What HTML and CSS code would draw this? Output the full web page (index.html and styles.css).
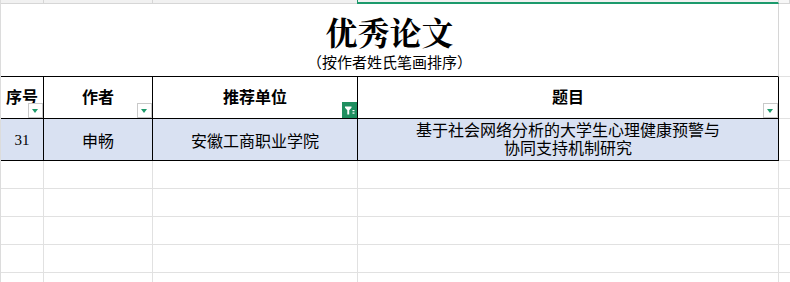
FILE: index.html
```html
<!DOCTYPE html>
<html lang="zh-CN">
<head>
<meta charset="utf-8">
<title>优秀论文</title>
<link rel="stylesheet" href="styles.css">
</head>
<body>
<div class="sheet">
  <!-- trailing edge of the row above -->
  <div class="cell strip"></div>
  <div class="cell strip"></div>
  <div class="cell strip"></div>
  <div class="cell strip strip-active"></div>
  <div class="cell strip strip-end"></div>

  <!-- merged title block -->
  <div class="cell title-cell">
    <div class="title">优秀论文</div>
    <div class="subtitle">（按作者姓氏笔画排序）</div>
  </div>
  <div class="cell blank"></div>

  <!-- header row -->
  <div class="cell head"><span>序号</span><i class="filter"></i></div>
  <div class="cell head"><span>作者</span><i class="filter"></i></div>
  <div class="cell head"><span>推荐单位</span>
    <i class="filter filter-on">
      <svg viewBox="0 0 15 16" width="15" height="16">
        <path d="M3 4.5h6.5v1.2L7.2 8.3v4.2H5.3V8.3L3 5.7z" fill="#fff"/>
        <rect x="10.5" y="8" width="2" height="1.2" fill="#fff"/>
        <rect x="10.5" y="10.5" width="2" height="1.2" fill="#fff"/>
      </svg>
    </i>
  </div>
  <div class="cell head head-last"><span>题目</span><i class="filter"></i></div>
  <div class="cell blank"></div>

  <!-- data row -->
  <div class="cell data num">31</div>
  <div class="cell data">申畅</div>
  <div class="cell data">安徽工商职业学院</div>
  <div class="cell data data-last">基于社会网络分析的大学生心理健康预警与<br>协同支持机制研究</div>
  <div class="cell blank"></div>

  <!-- empty rows -->
  <div class="cell"></div><div class="cell"></div><div class="cell"></div><div class="cell"></div><div class="cell blank"></div>
  <div class="cell"></div><div class="cell"></div><div class="cell"></div><div class="cell"></div><div class="cell blank"></div>
  <div class="cell"></div><div class="cell"></div><div class="cell"></div><div class="cell"></div><div class="cell blank"></div>
  <div class="cell"></div><div class="cell"></div><div class="cell"></div><div class="cell"></div><div class="cell blank"></div>
  <div class="cell"></div><div class="cell"></div><div class="cell"></div><div class="cell"></div><div class="cell blank"></div>
</div>
</body>
</html>
```

FILE: styles.css
```css
html, body {
  margin: 0;
  padding: 0;
  background: #fff;
}

body {
  font-family: "Noto Sans CJK SC", "Noto Sans", sans-serif;
  color: #000;
  overflow: hidden;
}

.sheet {
  display: grid;
  grid-template-columns: 43px 109px 205px 421px 1fr;
  grid-template-rows: 4px 73px 42px 42px repeat(5, 28px);
  width: 790px;
  height: 282px;
  overflow: hidden;
  border-left: 1px solid #dcdcdc;
  box-sizing: border-box;
}

.cell {
  box-sizing: border-box;
  border-right: 1px solid #e1e1e1;
  border-bottom: 1px solid #e1e1e1;
  position: relative;
  min-width: 0;
}

.blank {
  border-right: none;
}

/* the thin sliver of the previous row */
.strip {
  background: #f1f1f1;
  border-right-color: #d6d6d6;
  border-bottom-color: #d6d6d6;
}

.strip-active {
  border-bottom: 2px solid #1c9a6c;
  box-shadow: -1px 0 0 #1c9a6c;
}

.strip-end {
  background: #f7f7f7;
}

/* merged title */
.title-cell {
  grid-column: 1 / span 4;
  border-bottom: 1px solid #000;
  border-right: 1px solid #d6d6d6;
  text-align: center;
}

.title {
  font-family: "Noto Serif CJK SC", "Source Han Serif SC", "AR PL UMing CN", "Liberation Serif", serif;
  font-weight: 700;
  font-size: 32px;
  line-height: 36px;
  margin-top: 9px;
}

.subtitle {
  font-size: 15px;
  line-height: 18px;
  margin-top: 4px;
}

/* header row */
.head {
  border-right: 1px solid #000;
  border-bottom: 1px solid #000;
  display: flex;
  align-items: center;
  justify-content: center;
  font-weight: 700;
  font-size: 16px;
  padding-bottom: 1px;
}

.head span {
  margin-top: -2px;
}

.filter {
  position: absolute;
  right: 0;
  bottom: 0;
  width: 15px;
  height: 15px;
  box-sizing: border-box;
  border: 1px solid #c9c9c9;
  background: #fff;
}

.filter::after {
  content: "";
  position: absolute;
  left: 3px;
  top: 5px;
  border-left: 3.5px solid transparent;
  border-right: 3.5px solid transparent;
  border-top: 4px solid #1e9a6b;
}

.filter-on {
  width: 15px;
  height: 16px;
  border: none;
  background: #1f8f60;
  bottom: 0;
}

.filter-on::after {
  display: none;
}

.filter-on svg {
  display: block;
}

/* data row */
.data {
  background: #d9e1f2;
  border-right: 1px solid #000;
  border-bottom: 1px solid #000;
  display: flex;
  align-items: center;
  justify-content: center;
  text-align: center;
  font-size: 16px;
  line-height: 18px;
}

.num {
  font-family: "Liberation Serif", serif;
  font-size: 15px;
}

.data-last {
  padding-bottom: 3px;
}
```
